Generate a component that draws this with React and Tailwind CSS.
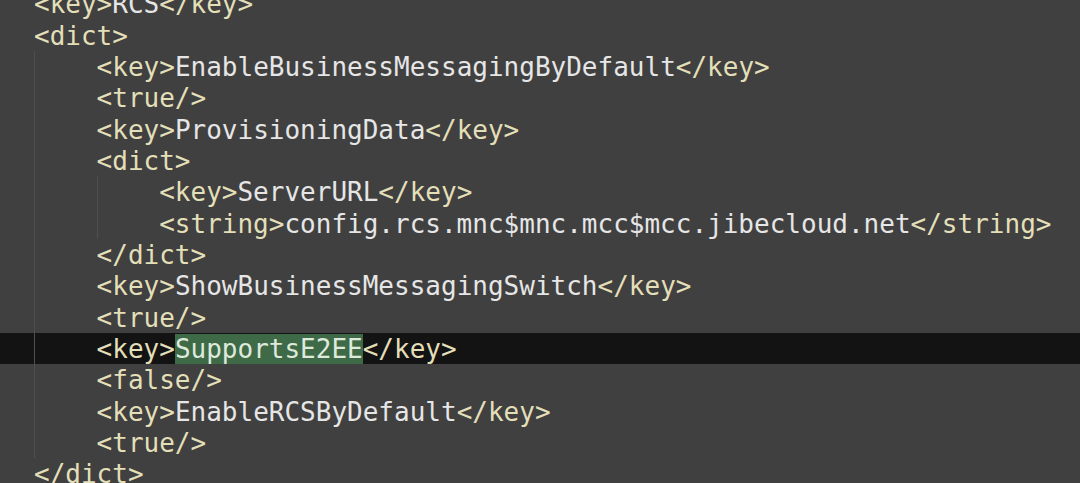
import React from "react";

const T = ({ children }) => <span className="text-[#e3dfb8]">{children}</span>;
const V = ({ children }) => <span className="text-[#e6e6e6]">{children}</span>;

const lines = [
  { lvl: 0, g: 0, c: <><T>&lt;key&gt;</T><V>RCS</V><T>&lt;/key&gt;</T></> },
  { lvl: 0, g: 0, c: <T>&lt;dict&gt;</T> },
  { lvl: 1, g: 1, c: <><T>&lt;key&gt;</T><V>EnableBusinessMessagingByDefault</V><T>&lt;/key&gt;</T></> },
  { lvl: 1, g: 1, c: <T>&lt;true/&gt;</T> },
  { lvl: 1, g: 1, c: <><T>&lt;key&gt;</T><V>ProvisioningData</V><T>&lt;/key&gt;</T></> },
  { lvl: 1, g: 1, c: <T>&lt;dict&gt;</T> },
  { lvl: 2, g: 2, c: <><T>&lt;key&gt;</T><V>ServerURL</V><T>&lt;/key&gt;</T></> },
  { lvl: 2, g: 2, c: <><T>&lt;string&gt;</T><V>config.rcs.mnc$mnc.mcc$mcc.jibecloud.net</V><T>&lt;/string&gt;</T></> },
  { lvl: 1, g: 1, c: <T>&lt;/dict&gt;</T> },
  { lvl: 1, g: 1, c: <><T>&lt;key&gt;</T><V>ShowBusinessMessagingSwitch</V><T>&lt;/key&gt;</T></> },
  { lvl: 1, g: 1, c: <T>&lt;true/&gt;</T> },
  {
    lvl: 1, g: 1, hl: true,
    c: <><T>&lt;key&gt;</T><span className="inline-block h-[30px] bg-[#3e6a47] text-[#dfe9dc]">SupportsE2EE</span><T>&lt;/key&gt;</T></>,
  },
  { lvl: 1, g: 1, c: <T>&lt;false/&gt;</T> },
  { lvl: 1, g: 1, c: <><T>&lt;key&gt;</T><V>EnableRCSByDefault</V><T>&lt;/key&gt;</T></> },
  { lvl: 1, g: 1, c: <T>&lt;true/&gt;</T> },
  { lvl: 0, g: 0, c: <T>&lt;/dict&gt;</T> },
];

export default function App() {
  return (
    <div className="w-[1080px] h-[483px] overflow-hidden bg-[#404040]">
      <div
        className="mt-[-12px] text-[26px] leading-[31.35px] whitespace-pre"
        style={{ fontFamily: '"DejaVu Sans Mono", "Liberation Mono", monospace' }}
      >
        {lines.map((l, i) => (
          <div key={i} className={`flex items-center h-[31.35px] pl-[34px] ${l.hl ? "bg-[#131313]" : ""}`}>
            {Array.from({ length: l.lvl }).map((_, j) => (
              <span
                key={j}
                className={`w-[62.6px] shrink-0 self-stretch ${j < l.g ? "border-l border-[#4f4f4f]" : ""}`}
              />
            ))}
            <span className="flex items-center leading-[30px] pt-[1px]">{l.c}</span>
          </div>
        ))}
      </div>
    </div>
  );
}
